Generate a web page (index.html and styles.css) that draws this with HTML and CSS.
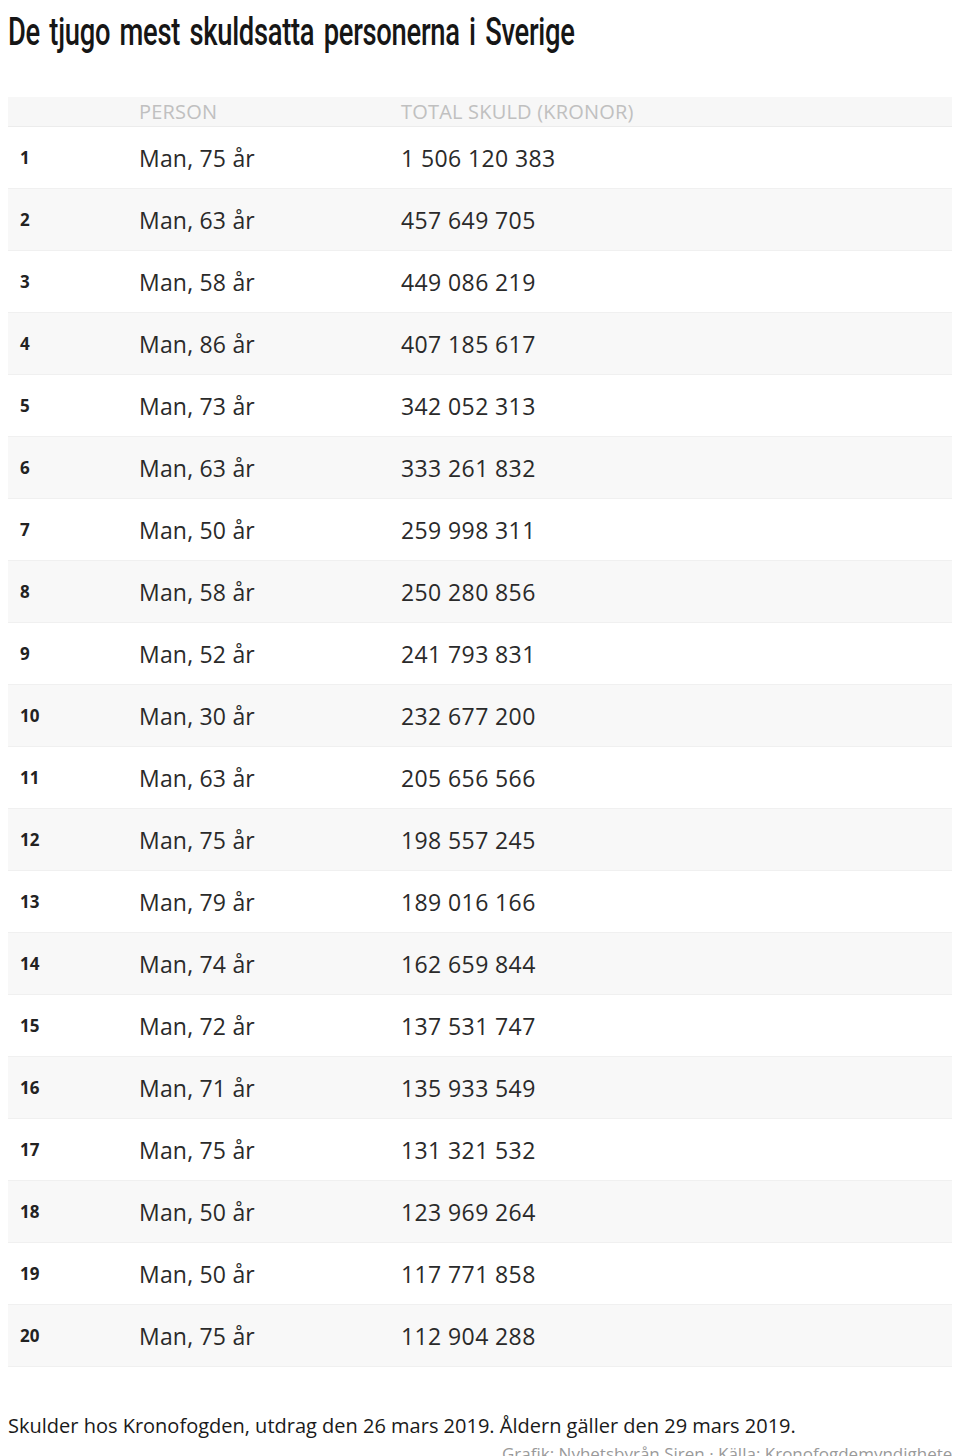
FILE: index.html
```html
<!DOCTYPE html>
<html lang="sv">
<head>
<meta charset="utf-8">
<title>De tjugo mest skuldsatta personerna i Sverige</title>
<link rel="stylesheet" href="styles.css">
</head>
<body>
<h1 class="title"><span class="title-text">De tjugo mest skuldsatta personerna i Sverige</span></h1>
<table class="debt">
  <thead>
    <tr><th class="rank"></th><th class="person">PERSON</th><th class="amount">TOTAL SKULD (KRONOR)</th></tr>
  </thead>
  <tbody>
    <tr><td class="rank">1</td><td class="person">Man, 75 år</td><td class="amount">1 506 120 383</td></tr>
    <tr><td class="rank">2</td><td class="person">Man, 63 år</td><td class="amount">457 649 705</td></tr>
    <tr><td class="rank">3</td><td class="person">Man, 58 år</td><td class="amount">449 086 219</td></tr>
    <tr><td class="rank">4</td><td class="person">Man, 86 år</td><td class="amount">407 185 617</td></tr>
    <tr><td class="rank">5</td><td class="person">Man, 73 år</td><td class="amount">342 052 313</td></tr>
    <tr><td class="rank">6</td><td class="person">Man, 63 år</td><td class="amount">333 261 832</td></tr>
    <tr><td class="rank">7</td><td class="person">Man, 50 år</td><td class="amount">259 998 311</td></tr>
    <tr><td class="rank">8</td><td class="person">Man, 58 år</td><td class="amount">250 280 856</td></tr>
    <tr><td class="rank">9</td><td class="person">Man, 52 år</td><td class="amount">241 793 831</td></tr>
    <tr><td class="rank">10</td><td class="person">Man, 30 år</td><td class="amount">232 677 200</td></tr>
    <tr><td class="rank">11</td><td class="person">Man, 63 år</td><td class="amount">205 656 566</td></tr>
    <tr><td class="rank">12</td><td class="person">Man, 75 år</td><td class="amount">198 557 245</td></tr>
    <tr><td class="rank">13</td><td class="person">Man, 79 år</td><td class="amount">189 016 166</td></tr>
    <tr><td class="rank">14</td><td class="person">Man, 74 år</td><td class="amount">162 659 844</td></tr>
    <tr><td class="rank">15</td><td class="person">Man, 72 år</td><td class="amount">137 531 747</td></tr>
    <tr><td class="rank">16</td><td class="person">Man, 71 år</td><td class="amount">135 933 549</td></tr>
    <tr><td class="rank">17</td><td class="person">Man, 75 år</td><td class="amount">131 321 532</td></tr>
    <tr><td class="rank">18</td><td class="person">Man, 50 år</td><td class="amount">123 969 264</td></tr>
    <tr><td class="rank">19</td><td class="person">Man, 50 år</td><td class="amount">117 771 858</td></tr>
    <tr><td class="rank">20</td><td class="person">Man, 75 år</td><td class="amount">112 904 288</td></tr>
  </tbody>
</table>
<p class="note">Skulder hos Kronofogden, utdrag den 26 mars 2019. Åldern gäller den 29 mars 2019.</p>
<p class="credit">Grafik: Nyhetsbyrån Siren · Källa: Kronofogdemyndigheten</p>
</body>
</html>
```
FILE: styles.css
```css
html, body {
  margin: 0;
  padding: 0;
  background: #ffffff;
}
body {
  margin: 8px;
  color: #1e1e1e;
  font-family: "Open Sans", "Noto Sans", sans-serif;
  overflow: hidden;
}
.title {
  margin: 0;
  padding-top: 2px;
  height: 46px;
  font-family: Roboto, "Liberation Sans", sans-serif;
  font-weight: 500;
  font-size: 38px;
  line-height: 44px;
  color: #161616;
  white-space: nowrap;
}
.title-text {
  display: inline-block;
  transform: scaleX(0.72);
  transform-origin: left center;
  letter-spacing: -0.4px;
  word-spacing: 4px;
}
.debt {
  margin-top: 41px;
  width: 945px;
  border-collapse: collapse;
}
.debt th {
  height: 29px;
  padding: 0;
  background: #f7f7f7;
  border-bottom: 1px solid #ececec;
  text-align: left;
  font-weight: 400;
  font-size: 20px;
  color: #c0c0c0;
  letter-spacing: 0.2px;
}
.debt td {
  height: 61px;
  padding: 0;
  border-bottom: 1px solid #f0f0f0;
  font-size: 23px;
  color: #2a2a2a;
}
.debt tbody tr:nth-child(even) td {
  background: #f8f8f8;
}
.debt .rank {
  width: 119px;
  padding-left: 12px;
  font-size: 17px;
  font-weight: 700;
  color: #222;
}
.debt .person {
  width: 262px;
}
.debt td.person {
  letter-spacing: 0.2px;
}
.debt td.amount {
  letter-spacing: 0.4px;
}
.note {
  margin: 46px 0 0;
  font-size: 20px;
  line-height: 26px;
  color: #1a1a1a;
}
.credit {
  margin: 5px 0 0 494px;
  font-size: 17px;
  line-height: 20px;
  white-space: nowrap;
  color: #9a9a9a;
}
```
